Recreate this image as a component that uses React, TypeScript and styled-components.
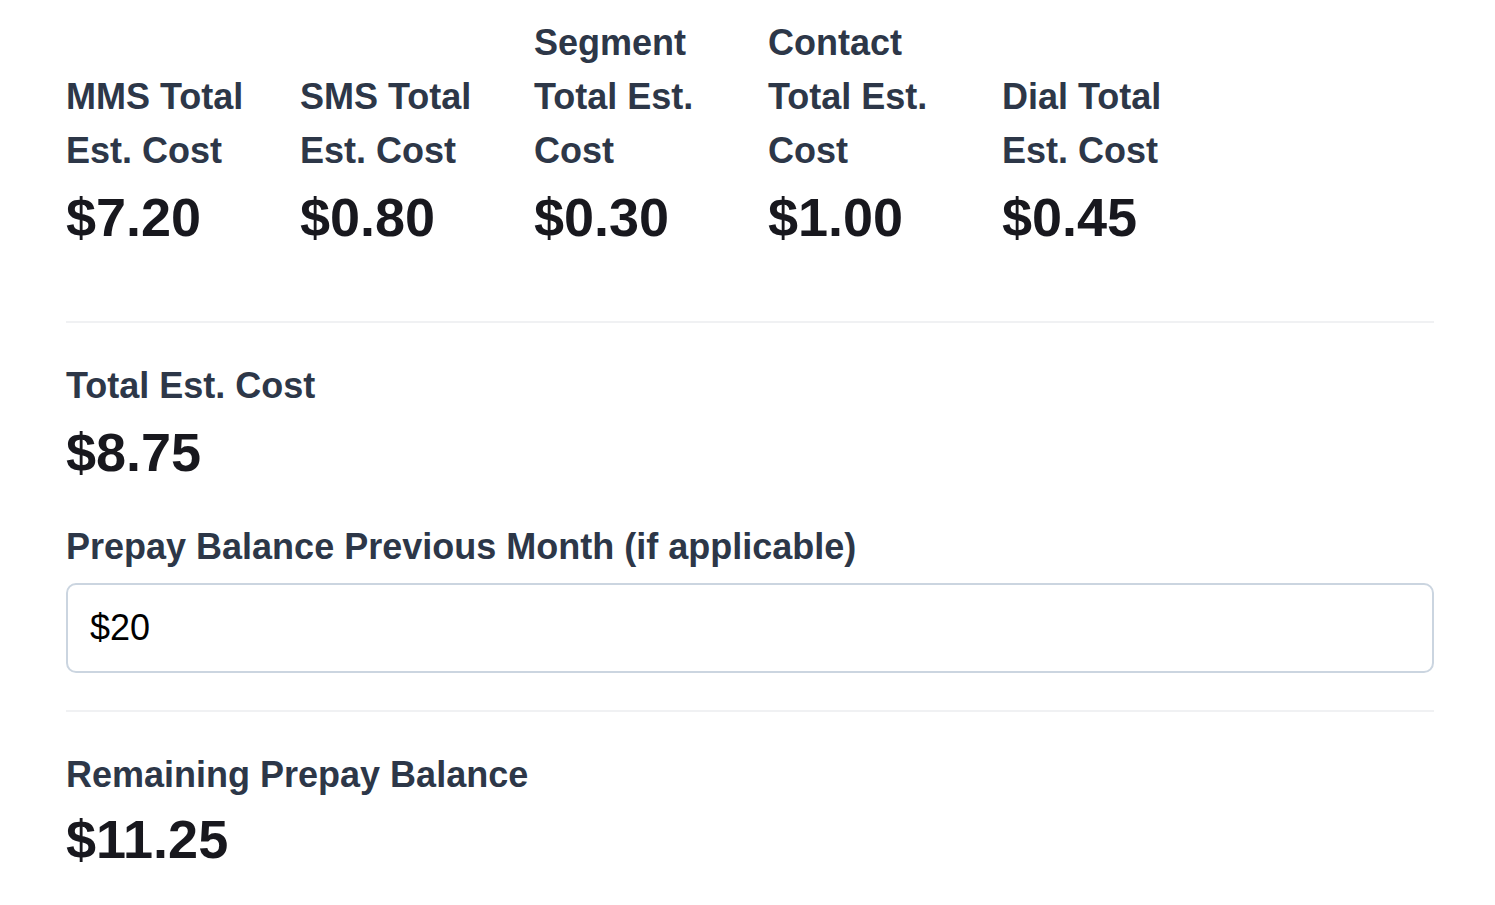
import { createGlobalStyle } from "styled-components";
import styled from "styled-components";

const GlobalStyle = createGlobalStyle`
  body {
    margin: 0;
    background: #ffffff;
    font-family: "Liberation Sans", Arial, sans-serif;
  }
`;

type Stat = { label: string; value: string };

const stats: Stat[] = [
  { label: "MMS Total Est. Cost", value: "$7.20" },
  { label: "SMS Total Est. Cost", value: "$0.80" },
  { label: "Segment Total Est. Cost", value: "$0.30" },
  { label: "Contact Total Est. Cost", value: "$1.00" },
  { label: "Dial Total Est. Cost", value: "$0.45" },
];

export default function App() {
  return (
    <>
      <GlobalStyle />
      <Page>
        <StatsRow>
          {stats.map((s) => (
            <StatCell key={s.label}>
              <Label>{s.label}</Label>
              <Value $top={3}>{s.value}</Value>
            </StatCell>
          ))}
        </StatsRow>

        <Divider $top={68} />

        <Section>
          <Label>Total Est. Cost</Label>
          <Value $top={3}>$8.75</Value>

          <FieldLabel htmlFor="prepay">
            Prepay Balance Previous Month (if applicable)
          </FieldLabel>
          <Input id="prepay" type="text" defaultValue="$20" />
        </Section>

        <Divider $top={37} />

        <Section $top={36}>
          <Label>Remaining Prepay Balance</Label>
          <Value $top={1}>$11.25</Value>
        </Section>
      </Page>
    </>
  );
}

const Page = styled.main`
  width: 1368px;
  margin-left: 66px;
  padding-top: 16px;
  padding-bottom: 20px;
`;

const StatsRow = styled.div`
  display: grid;
  grid-template-columns: repeat(5, 198px);
  column-gap: 36px;
  align-items: end;
`;

const StatCell = styled.div`
  display: flex;
  flex-direction: column;
`;

const Label = styled.div`
  color: #2d3748;
  font-size: 36px;
  line-height: 54px;
  font-weight: 700;
`;

const Value = styled.div<{ $top?: number }>`
  margin-top: ${(p) => p.$top ?? 5}px;
  color: #18181e;
  font-size: 54px;
  line-height: 72px;
  font-weight: 700;
`;

const Divider = styled.hr<{ $top: number }>`
  margin: ${(p) => p.$top}px 0 0;
  border: none;
  height: 2px;
  background: #f0f1f3;
`;

const Section = styled.section<{ $top?: number }>`
  display: flex;
  flex-direction: column;
  padding-top: ${(p) => p.$top ?? 36}px;
`;

const FieldLabel = styled.label`
  margin-top: 32px;
  color: #2d3748;
  font-size: 36px;
  line-height: 54px;
  font-weight: 700;
`;

const Input = styled.input`
  box-sizing: border-box;
  margin-top: 9px;
  width: 100%;
  height: 90px;
  padding: 0 22px;
  border: 2px solid #cbd5e0;
  border-radius: 10px;
  font-family: "Liberation Sans", Arial, sans-serif;
  font-size: 36px;
  color: #000000;
  background: #ffffff;
  outline: none;
`;
